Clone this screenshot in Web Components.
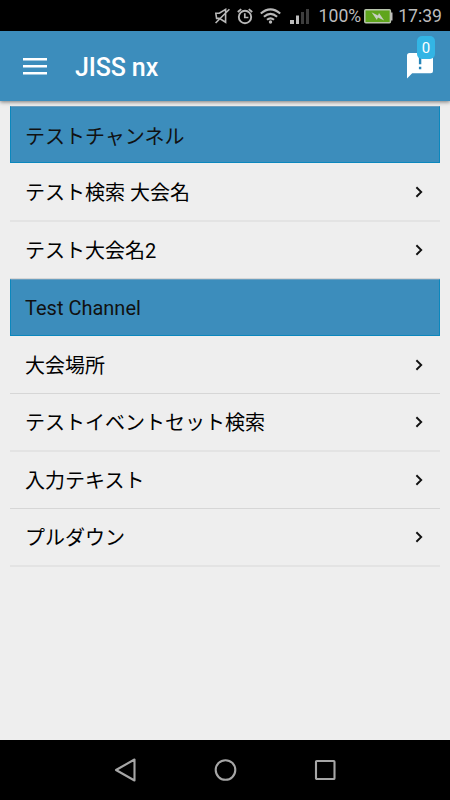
<!DOCTYPE html>
<html lang="ja">
<head>
<meta charset="utf-8">
<title>JISS nx</title>
<style>
html,body{margin:0;height:100%;overflow:hidden;background:#eee}
body{font-family:Roboto,"Noto Sans CJK JP",sans-serif}
</style>
</head>
<body>
<app-screen>
  <status-bar slot="status" battery="100%" time="17:39"></status-bar>
  <app-header slot="header" count="0">JISS nx</app-header>
  <list-header>テストチャンネル</list-header>
  <list-row soft style="height:59px">テスト検索 大会名</list-row>
  <list-row>テスト大会名2</list-row>
  <list-header latin>Test Channel</list-header>
  <list-row style="height:58px">大会場所</list-row>
  <list-row soft>テストイベントセット検索</list-row>
  <list-row>入力テキスト</list-row>
  <list-row soft>プルダウン</list-row>
  <nav-bar slot="nav"></nav-bar>
</app-screen>
<script>
function define(name, render) {
  customElements.define(name, class extends HTMLElement {
    constructor() {
      super();
      this.attachShadow({ mode: 'open' }).innerHTML = render(this);
    }
  });
}

define('app-screen', () => `
<style>
:host{display:flex;flex-direction:column;width:450px;height:800px;background:#eee}
main{flex:1;min-height:0;padding:5px 10px 0}
</style>
<slot name="status"></slot><slot name="header"></slot><main><slot></slot></main><slot name="nav"></slot>`);

define('status-bar', el => `
<style>
:host{display:flex;align-items:center;justify-content:flex-end;height:31px;box-sizing:border-box;padding:1px 8px 0 0;background:#000;color:#bdbdbd;font-size:17.6px;line-height:30px}
svg{display:block;flex:none}
.mute{margin-right:7px}.alarm{margin-right:7px}.wifi{margin-right:9px}.cell{margin-right:9px}
.bat{margin:0 5px 0 3px}
span{display:block;white-space:nowrap}
</style>
<svg class="mute" width="15" height="16" viewBox="0 0 15 16" fill="none" stroke="#b8b8b8" stroke-width="1.6"><path d="M.8 5.3h3.5L10.6 1.4v12.9L4.3 10.4H1.6zM.6 15L14.4 1.2"/></svg>
<svg class="alarm" width="16" height="17" viewBox="0 0 16 17" fill="none" stroke="#b8b8b8"><circle cx="8" cy="9" r="6.2" stroke-width="1.9"/><path d="M.8 4L4.2 1.1M15.2 4L11.8 1.1" stroke-width="1.9"/><path d="M7.8 5.3v4.2h3.6" stroke-width="1.7"/></svg>
<svg class="wifi" width="21" height="16" viewBox="0 0 21 16" fill="none" stroke="#b8b8b8" stroke-width="2.1"><path d="M.8 5.5Q10.5-2.8 20.2 5.5M3.9 8.7Q10.5 3 17.1 8.7M7 11.8Q10.5 8.8 14 11.8"/><circle cx="10.5" cy="14" r="1.7" fill="#b8b8b8" stroke="none"/></svg>
<svg class="cell" width="20" height="16" viewBox="0 0 20 16"><path fill="#bdbdbd" d="M0 12h4v4H0zM6 7.5h3V16H6z"/><path fill="#3d3d3d" d="M11 4h3v12h-3zM16 1h3v15h-3z"/></svg>
<span>${el.getAttribute('battery')}</span>
<svg class="bat" width="29" height="15" viewBox="0 0 29 15"><rect x=".8" y=".8" width="25.6" height="13" rx="1" fill="#5fa51c" stroke="#b9c5ae" stroke-width="1.5"/><path d="M26.5 3.5h2v8h-2z" fill="#bdbdbd"/><path d="M7.5 3.2l6.5 3.2 1-2.4 5.2 7.5-6.3-3-1 2.4z" fill="#c8cfc1"/></svg>
<span>${el.getAttribute('time')}</span>`);

define('app-header', el => `
<style>
:host{display:flex;align-items:center;height:70px;box-sizing:border-box;padding:0 17px 0 23px;background:#3c8dbc;color:#fff;box-shadow:0 1px 4px rgba(0,0,0,.5);z-index:1}
svg{display:block}
h1{flex:1;margin:4px 0 0 28px;font-size:25px;letter-spacing:-.12px;font-weight:500;line-height:30px}
.msg{position:relative;width:26px;height:26px}
.badge{position:absolute;left:10px;top:-17px;width:18px;height:23px;border-radius:5px;background:#33b5e5;font-size:15px;line-height:25px;text-align:center}
</style>
<svg width="24" height="18" viewBox="0 0 24 18" fill="#fff"><path d="M0 1h24v2.5H0zM0 8h24v2.5H0zM0 15h24v2.5H0z"/></svg>
<h1><slot></slot></h1>
<div class="msg"><svg width="26" height="26" viewBox="0 0 26 26"><path d="M2.5 0h21Q26 0 26 2.5v15.2Q26 20.2 23.5 20.2H5.2L0 25.4V2.5Q0 0 2.5 0z" fill="#fff"/><path d="M11.9 2.5h2.4v8.8h-2.4zM11.9 13.8h2.4v2.5h-2.4z" fill="#2584b8"/></svg><div class="badge">${el.getAttribute('count')}</div></div>`);

define('list-header', () => `
<style>
:host{display:block;height:57px;box-sizing:border-box;padding:1px 14px 0;border:1px solid #0b87bd;border-top-color:#6a9fc0;background:#3c8dbc;color:#111;font-size:20px;line-height:58px}
:host([latin]){line-height:54px}
</style><slot></slot>`);

define('list-row', () => `
<style>
:host{display:flex;align-items:center;justify-content:space-between;height:57px;box-sizing:border-box;padding:0 16px 0 15px;border-bottom:1px solid #d6d6d6;color:#000;font-size:20px;line-height:30px}
:host([soft]){height:58px;border-bottom:2px solid #e3e3e3}
span{padding-top:2.5px}
svg{display:block;flex:none}
</style><span><slot></slot></span>
<svg width="10" height="12" viewBox="0 0 10 12" fill="none" stroke="#111" stroke-width="1.9"><path d="M2.4 1.3L7.2 6 2.4 10.7"/></svg>`);

define('nav-bar', () => `
<style>
:host{display:flex;align-items:center;justify-content:center;gap:76px;height:60px;background:#000}
svg{display:block}
</style>
<svg width="24" height="26" viewBox="0 0 24 26" fill="none" stroke="#a6a6a6" stroke-width="2.1" stroke-linejoin="round"><path d="M21.5 2.5v21L3 13z"/></svg>
<svg width="24" height="24" viewBox="0 0 24 24" fill="none" stroke="#a6a6a6" stroke-width="2.1"><circle cx="12.5" cy="12" r="9.8"/></svg>
<svg width="24" height="24" viewBox="0 0 24 24" fill="none" stroke="#a6a6a6" stroke-width="2.1"><rect x="3" y="3" width="18.5" height="18" rx=".8"/></svg>`);
</script>
</body>
</html>
